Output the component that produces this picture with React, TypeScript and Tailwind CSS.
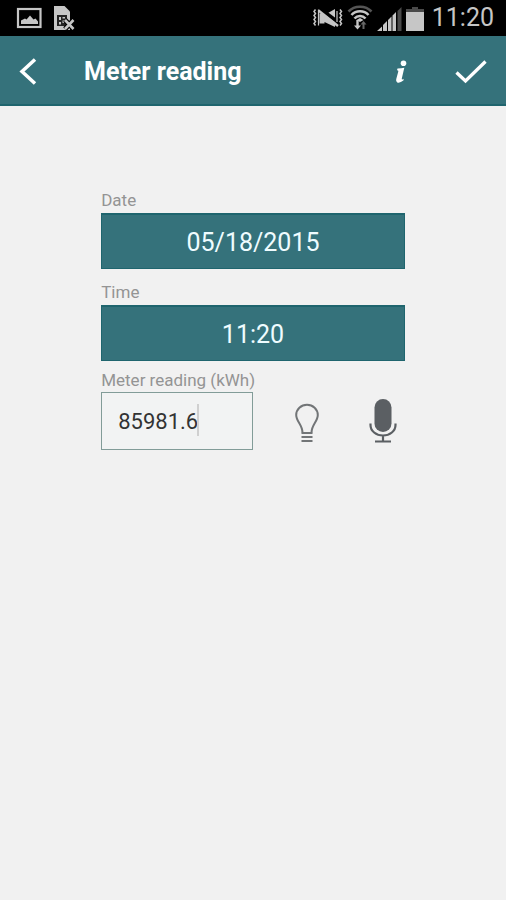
import { useState } from 'react';

function StatusBar() {
  return (
    <div className="flex h-9 items-center justify-between bg-black pl-4 pr-3 text-[#c6c6c6]">
      <div className="flex items-center gap-3">
        <svg className="h-[22px] w-[26px]" viewBox="0 0 26 22" fill="none" aria-hidden="true">
          <rect x="2" y="2" width="22.500" height="18" stroke="currentColor" strokeWidth="2.200" />
          <path d="M5 17v-3.500l4-2 1.500 1L14 8.500l3.500 4 2-1 2.500 3V17z" fill="currentColor" />
        </svg>
        <svg className="h-[26px] w-[22px]" viewBox="0 0 22 26" aria-hidden="true">
          <path d="M0 1h10.500l5.500 5.500V25H0z" fill="currentColor" />
          <path d="M3 10h10v11H3z" fill="#222" />
          <path d="M5 12h2v3H5zM8.500 12h2.500v1.500H8.500zM5 17h2v2.500H5zM8.500 15.500H11V18H8.500z" fill="currentColor" />
          <path d="m11 15 8.500 9M19.500 15l-8.500 9" stroke="#000" strokeWidth="5" />
          <path d="m11 15 8.500 9M19.500 15l-8.500 9" stroke="currentColor" strokeWidth="2.600" />
        </svg>
      </div>

      <div className="flex items-center">
        <svg className="h-5 w-[30px]" viewBox="0 0 30 20" fill="none" aria-hidden="true">
          <path d="M6.500 5.500h5v10h-5zM11.500 7 22 1v18l-10.500-5z" fill="currentColor" />
          <path d="M6 0 28 16.500" stroke="#000" strokeWidth="4" />
          <path d="M5.500 2.500 25 18" stroke="currentColor" strokeWidth="2.400" />
          <path d="m2.500 1.500-1.500 2 1.500 2-1.500 2 1.500 2-1.500 2 1.500 2-1.500 2 1.500 2M27 1.500l1.500 2-1.500 2 1.500 2-1.500 2 1.500 2-1.500 2 1.500 2-1.500 2" stroke="currentColor" strokeWidth="1.500" />
          <path d="M5.500 1.500v16M24 3v11" stroke="currentColor" strokeWidth="1.200" />
        </svg>
        <svg className="ml-1 h-[26px] w-[26px]" viewBox="0 0 26 26" fill="none" aria-hidden="true">
          <path d="M1.500 6.500c6-6.300 17-6.300 23 0" stroke="#555" strokeWidth="2.600" />
          <path d="M4.500 10c4.500-5 12.500-5 17 0M7.500 13.500c3-3.400 8-3.400 11 0" stroke="currentColor" strokeWidth="2.600" />
          <path d="m9.500 15 3.500-2 3.500 2-3.500 2z" fill="currentColor" />
          <path d="M10.500 15v7" stroke="currentColor" strokeWidth="2.400" />
          <path d="M7 20.500h7l-3.500 4z" fill="currentColor" />
          <path d="M16.500 18v6" stroke="#666" strokeWidth="2" />
          <path d="M13.500 19.500h6l-3-3.500z" fill="#666" />
        </svg>
        <svg className="ml-1 mt-px h-6 w-[26px]" viewBox="0 0 26 24" aria-hidden="true">
          <path d="M0 24l5-4.500V24zM6 24v-6l4-4v10zM11 24V13l3.500-3.500V24zM15.500 24V8.500L19 5v19z" fill="currentColor" />
          <path d="M20.500 24V4l4-4v24z" fill="#4a4a4a" />
        </svg>
        <svg className="ml-[3px] mt-px h-6 w-[18px]" viewBox="0 0 18 24" aria-hidden="true">
          <path d="M6 0h6v2h6v3H0V2h6z" fill="#4a4a4a" />
          <path d="M0 5h18v19H0z" fill="currentColor" />
        </svg>
        <span className="ml-2 text-[25px] leading-9">11:20</span>
      </div>
    </div>
  );
}

function Header() {
  return (
    <header className="flex h-[70px] items-center border-b-2 border-[#1f656e] bg-[#35727b] pt-1 text-white">
      <button type="button" aria-label="Back" className="flex h-full w-14 items-center justify-center">
        <svg className="h-7 w-5" viewBox="0 0 20 28" fill="none">
          <path d="M17 1.500 4 13.500l13 12" stroke="currentColor" strokeWidth="3.500" />
        </svg>
      </button>
      <h1 className="ml-7 text-[25px] font-bold">Meter reading</h1>
      <button type="button" aria-label="Information" className="ml-auto flex h-full w-[70px] items-center justify-center">
        <svg className="h-6 w-3" viewBox="0 0 12 24" fill="currentColor">
          <circle cx="8.500" cy="3.200" r="2.800" />
          <path d="M2.500 8.500q4 0 6.800-.8L6.800 18.500q-.3 1.800 1.900.3l-.3 1.800Q5 23.300 2.300 22.500.6 22 1.200 19.300L3.300 11.500q.3-1.300-1.300-1.300z" />
        </svg>
      </button>
      <button type="button" aria-label="Save" className="flex h-full w-[70px] items-center justify-center">
        <svg className="h-6 w-8" viewBox="0 0 32 24" fill="none">
          <path d="m1.500 12.500 9 8.500L30.500 1.500" stroke="currentColor" strokeWidth="3.300" />
        </svg>
      </button>
    </header>
  );
}

function PickerField({ id, label, value }: { id: string; label: string; value: string }) {
  return (
    <div>
      <label htmlFor={id} className="block text-[17px] leading-6 text-[#949494]">{label}</label>
      <button
        id={id}
        type="button"
        className="mt-px block h-14 w-full border border-t-2 border-[#1f656e] bg-[#35727b] pt-[3px] text-[25px] text-[#effcff]"
      >
        {value}
      </button>
    </div>
  );
}

export default function App() {
  const [reading, setReading] = useState('85981.6');

  return (
    <div className="min-h-screen bg-[#f1f1f1] font-['Roboto',sans-serif]">
      <StatusBar />
      <Header />

      <form className="mx-auto w-3/5 pt-[82px]">
        <div className="flex flex-col gap-[11px]">
          <PickerField id="date" label="Date" value="05/18/2015" />
          <PickerField id="time" label="Time" value="11:20" />
        </div>

        <label htmlFor="reading" className="mt-[7px] block text-[17px] leading-6 text-[#949494]">
          Meter reading (kWh)
        </label>
        <div className="flex items-center">
          <div className="relative w-1/2">
            <input
              id="reading"
              type="text"
              inputMode="decimal"
              value={reading}
              onChange={(e) => setReading(e.target.value)}
              className="block h-[58px] w-full border border-[#829c98] bg-[#f2f3f3] px-4 text-[22px] text-[#333] outline-none"
            />
            {/* text cursor */}
            <span className="pointer-events-none absolute left-24 top-3 h-8 w-0.5 bg-[#d0d0d0]" />
          </div>
          <button type="button" aria-label="Flashlight" className="ml-auto flex h-14 w-11 items-center justify-center text-[#727577]">
            <svg className="mt-1 h-10 w-6" viewBox="0 0 24 40" fill="none" stroke="currentColor" strokeWidth="2">
              <path d="M7.500 29.500C7.500 22 1.200 18.500 1.200 12a10.800 10.300 0 0 1 21.600 0c0 6.500-6.300 10-6.300 17.500" />
              <path d="M6.500 30h11M6.500 34h11M6.500 38h11" />
            </svg>
          </button>
          <button type="button" aria-label="Voice input" className="ml-8 flex h-14 w-11 items-center justify-center text-[#5b5f63]">
            <svg className="h-11 w-7" viewBox="0 0 28 44" fill="none">
              <rect x="5.500" y="0" width="17" height="33" rx="8.500" fill="currentColor" />
              <path d="M1.500 24.500v1.500c0 6 5.500 10.500 12.500 10.500s12.500-4.500 12.500-10.500v-1.500M14 36v6M6 42.500h16" stroke="currentColor" strokeWidth="2.200" />
            </svg>
          </button>
        </div>
      </form>
    </div>
  );
}
